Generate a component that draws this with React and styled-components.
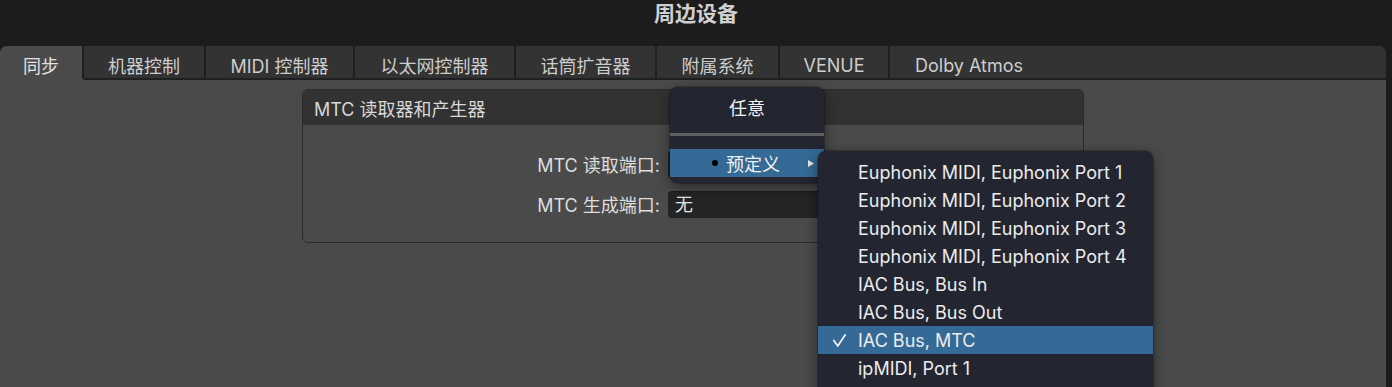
import React from 'react';
import styled, { createGlobalStyle } from 'styled-components';

const GlobalStyle = createGlobalStyle`
  html, body { margin: 0; padding: 0; background: #1c1c1c; }
  body {
    font-family: Inter, "Noto Sans CJK SC", sans-serif;
    -webkit-font-smoothing: antialiased;
  }
`;

const Window = styled.div`
  position: relative;
  width: 1392px;
  height: 387px;
  display: flex;
  flex-direction: column;
  background: #1c1c1c;
  overflow: hidden;
`;

const TitleBar = styled.div`
  height: 46px;
  box-sizing: border-box;
  padding-top: 0;
  display: flex;
  justify-content: center;
  color: #d0d0d0;
  font-size: 21px;
  font-weight: 700;
  line-height: 28px;
`;

const Frame = styled.div`
  flex: 1;
  display: flex;
  flex-direction: column;
  margin-right: 6px;
`;

const TabStrip = styled.div`
  height: 34px;
  display: flex;
  background: #333333;
  border-radius: 7px 7px 0 0;
  overflow: hidden;
`;

const Tab = styled.div`
  box-sizing: border-box;
  flex: ${p => (p.$w ? `0 0 ${p.$w}px` : '1 1 auto')};
  display: flex;
  align-items: center;
  justify-content: ${p => (p.$w ? 'center' : 'flex-start')};
  padding-left: ${p => (p.$w ? 0 : 25)}px;
  padding-top: 6px;
  background: ${p => (p.$active ? '#4a4a4a' : '#333333')};
  border-right: ${p => (p.$w ? '2px solid #202020' : 'none')};
  border-bottom: 2px solid ${p => (p.$active ? '#4a4a4a' : '#202020')};
  color: ${p => (p.$active ? '#e2e2e2' : '#cdcdcd')};
  font-size: 18px;
  white-space: nowrap;
`;

const Content = styled.div`
  flex: 1;
  background: #4a4a4a;
  padding: 9px 0 0 302px;
`;

const Panel = styled.div`
  width: 782px;
  box-sizing: border-box;
  border: 1px solid #2a2a2a;
  border-radius: 6px;
  overflow: hidden;
`;

const PanelHeader = styled.div`
  height: 35px;
  display: flex;
  align-items: center;
  padding-left: 11px;
  background: #323232;
  color: #d8d8d8;
  font-size: 18px;
`;

const PanelBody = styled.div`
  height: 117px;
  box-sizing: border-box;
  padding-top: 26px;
  display: grid;
  grid-template-columns: 357px 232px;
  grid-auto-rows: 27px;
  column-gap: 8px;
  row-gap: 13px;
  align-content: start;
`;

const Label = styled.div`
  text-align: right;
  line-height: 29px;
  color: #dedede;
  font-size: 18px;
  white-space: nowrap;
`;

const Field = styled.div`
  height: 27px;
  box-sizing: border-box;
  padding-left: 7px;
  background: #242424;
  border-top: 1px solid #1a1a1a;
  border-radius: 4px;
  color: #e2e2e2;
  font-size: 18px;
  line-height: 26px;
`;

const MainMenu = styled.div`
  position: absolute;
  left: 670px;
  top: 87px;
  width: 154px;
  height: 96px;
  display: flex;
  flex-direction: column;
  background: #232631;
  border-radius: 8px;
  box-shadow: 0 4px 14px rgba(0, 0, 0, 0.45), 0 0 0 1px rgba(0, 0, 0, 0.25);
  overflow: hidden;
  z-index: 2;
`;

const MenuHeading = styled.div`
  height: 40px;
  padding-bottom: 6px;
  display: flex;
  align-items: center;
  justify-content: center;
  color: #f2f2f2;
  font-size: 18px;
`;

const MenuSeparator = styled.div`
  height: 3px;
  background: #5f5f5f;
  margin-bottom: 13px;
`;

const MenuRow = styled.div`
  height: 28px;
  display: flex;
  align-items: center;
  background: ${p => (p.$selected ? '#346a95' : 'transparent')};
  color: #f0f0f0;
  font-size: 18px;
  white-space: nowrap;
`;

const Bullet = styled.span`
  width: 6px;
  height: 6px;
  border-radius: 50%;
  background: #000;
  margin: 0 8px 0 42px;
`;

const RowText = styled.span`
  flex: 1;
`;

const Arrow = styled.svg`
  width: 6px;
  height: 7px;
  margin-right: 10px;
`;

const SubMenu = styled.div`
  position: absolute;
  left: 818px;
  top: 151px;
  width: 335px;
  height: 260px;
  box-sizing: border-box;
  padding-top: 7px;
  background: #232631;
  border-radius: 8px 8px 0 0;
  box-shadow: 0 4px 14px rgba(0, 0, 0, 0.45), 0 0 0 1px rgba(0, 0, 0, 0.25);
  z-index: 3;
`;

const SubRow = styled.div`
  height: 28px;
  display: flex;
  align-items: center;
  background: ${p => (p.$selected ? '#346a95' : 'transparent')};
  color: #ececec;
  font-size: 18px;
  white-space: nowrap;
`;

const CheckSlot = styled.span`
  width: 40px;
  flex: 0 0 40px;
  display: flex;
  align-items: center;
  padding-left: 15px;
  box-sizing: border-box;
`;

const tabs = [
  { label: '同步', w: 84, active: true },
  { label: '机器控制', w: 122 },
  { label: 'MIDI 控制器', w: 149 },
  { label: '以太网控制器', w: 161 },
  { label: '话筒扩音器', w: 141 },
  { label: '附属系统', w: 123 },
  { label: 'VENUE', w: 110 },
  { label: 'Dolby Atmos' },
];

const ports = [
  'Euphonix MIDI, Euphonix Port 1',
  'Euphonix MIDI, Euphonix Port 2',
  'Euphonix MIDI, Euphonix Port 3',
  'Euphonix MIDI, Euphonix Port 4',
  'IAC Bus, Bus In',
  'IAC Bus, Bus Out',
  'IAC Bus, MTC',
  'ipMIDI, Port 1',
];

export default function App() {
  return (
    <Window>
      <GlobalStyle />
      <TitleBar>周边设备</TitleBar>
      <Frame>
        <TabStrip>
          {tabs.map(t => (
            <Tab key={t.label} $w={t.w} $active={t.active}>
              {t.label}
            </Tab>
          ))}
        </TabStrip>
        <Content>
          <Panel>
            <PanelHeader>MTC 读取器和产生器</PanelHeader>
            <PanelBody>
              <Label>MTC 读取端口:</Label>
              <Field />
              <Label>MTC 生成端口:</Label>
              <Field>无</Field>
            </PanelBody>
          </Panel>
        </Content>
      </Frame>

      <MainMenu>
        <MenuHeading>任意</MenuHeading>
        <MenuSeparator />
        <MenuRow $selected>
          <Bullet />
          <RowText>预定义</RowText>
          <Arrow viewBox="0 0 6 7">
            <path d="M0 0 L6 3.5 L0 7 Z" fill="#e8e8e8" />
          </Arrow>
        </MenuRow>
      </MainMenu>

      <SubMenu>
        {ports.map(p => {
          const sel = p === 'IAC Bus, MTC';
          return (
            <SubRow key={p} $selected={sel}>
              <CheckSlot>
                {sel && (
                  <svg width="13" height="13" viewBox="0 0 13 13">
                    <polyline
                      points="0.8,6.5 4.8,12 12.2,0.8"
                      fill="none"
                      stroke="#f4f4f4"
                      strokeWidth="1.7"
                      strokeLinecap="round"
                      strokeLinejoin="round"
                    />
                  </svg>
                )}
              </CheckSlot>
              <RowText>{p}</RowText>
            </SubRow>
          );
        })}
      </SubMenu>
    </Window>
  );
}
